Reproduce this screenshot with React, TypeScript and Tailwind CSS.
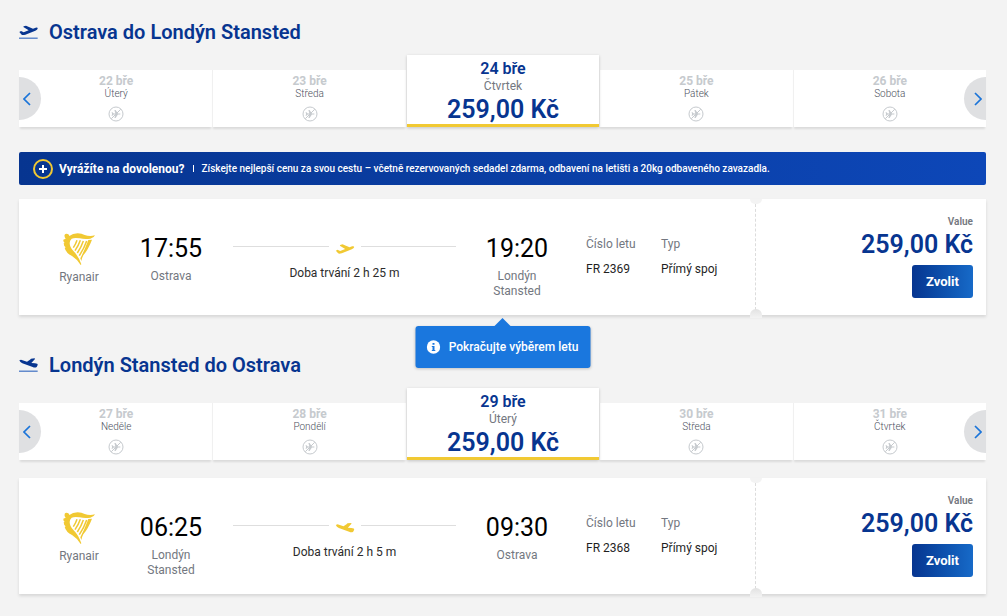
import React from "react";

type Day = { date: string; weekday: string; price?: string };

type Flight = {
  departTime: string;
  departCity: string;
  arriveTime: string;
  arriveCity: string;
  duration: string;
  number: string;
  type: string;
  price: string;
};

type Direction = "takeoff" | "landing";

const TAKEOFF =
  "M1 20 L6 17 L14 21 L29 15 L13 5 L14 3 L21 1 L42 10 L50 7 Q57 6 56 10 Q55 13 49 16 L19 28 Q10 30 8 28 Z";
const LANDING =
  "M1 6 L6 4 L24 10 L33 4 L36 1 L47 0 L48 2 L37 14 L48 15 Q57 15 56 20 L53 26 Q48 29 41 26 L10 15 Q3 12 1 6 Z";

function TitlePlane({ direction }: { direction: Direction }) {
  return (
    <svg viewBox="0 0 57 45" className="h-[15px] w-[19px]" aria-hidden="true">
      <path d={direction === "takeoff" ? TAKEOFF : LANDING} transform="translate(0 4)" fill="#073590" />
      <path d="M0 42.5H56" stroke="#1a56b8" strokeWidth="3" />
    </svg>
  );
}

function RoutePlane({ direction }: { direction: Direction }) {
  return (
    <svg viewBox="0 0 57 30" className="h-[10px] w-5" aria-hidden="true">
      <path d={direction === "takeoff" ? TAKEOFF : LANDING} fill="#f1c933" />
    </svg>
  );
}

function Harp() {
  return (
    <svg viewBox="0 0 96 96" className="size-8" aria-hidden="true">
      <g fill="#f1c933">
        <path d="M5 5 Q8 1 14 3 Q19 4 19 9 Q29 1 44 1 Q56 2 65 6 Q80 11 96 7 Q93 15 82 17 Q66 20 50 16 Q35 13 26 17 Q20 22 20 30 Q20 43 32 55 Q47 70 55 94 L53 96 Q43 79 27 69 Q9 60 5 45 L8 43 Q2 39 2 31 L5 30 Q0 25 1 20 Q4 19 8 17 Q3 11 5 5 Z" />
        <path d="M76 21 L87 20 Q76 49 61 67 Q57 74 55 84 L52 76 Q64 53 76 21 Z" />
      </g>
      <path
        d="M42 22 Q38 34 31 44 M52 22 Q47 37 36 53 M61 24 Q55 42 43 60 M71 24 Q64 45 49 68"
        fill="none"
        stroke="#f1c933"
        strokeWidth="4.5"
      />
    </svg>
  );
}

function NoFlight() {
  return (
    <svg viewBox="0 0 16 16" className="size-4" role="img" aria-label="Bez letu">
      <circle cx="8" cy="8" r="7" fill="none" stroke="#c6cace" strokeWidth="1" />
      <path
        d="M3.5 6.3h1l1.2 1.2h1.700L6.400 4h1.200l2.300 3.500h2.200q1 .5 0 1H9.900L7.600 12H6.400l1-3.500H5.700L4.500 9.700h-1L4.200 8Z"
        fill="#c6cace"
      />
      <path d="M3.3 12.7 12.7 3.3" stroke="#c6cace" strokeWidth="1" />
    </svg>
  );
}

function Chevron({ side }: { side: "left" | "right" }) {
  return (
    <svg viewBox="0 0 8 14" className="h-[14px] w-2" aria-hidden="true">
      <path
        d={side === "left" ? "M7 1 1 7l6 6" : "M1 1l6 6-6 6"}
        fill="none"
        stroke="#1a74d9"
        strokeWidth="1.7"
      />
    </svg>
  );
}

function Title({ direction, children }: { direction: Direction; children: React.ReactNode }) {
  return (
    <div className="flex h-7 items-center gap-[11px] pt-px">
      <TitlePlane direction={direction} />
      <h2 className="text-xl leading-7 font-semibold text-[#073590]">{children}</h2>
    </div>
  );
}

function DayPicker({ days }: { days: Day[] }) {
  return (
    <div className="relative mt-2.5">
      <div className="grid grid-cols-5 items-end">
        {days.map((day) =>
          day.price ? (
            <button
              key={day.date}
              type="button"
              aria-pressed="true"
              className="relative ml-px flex h-[72px] flex-col items-center border-b-3 border-[#f1c933] bg-white pt-1 shadow-[0_1px_3px_rgba(0,0,0,0.2)]"
            >
              <span className="text-base leading-5 font-semibold text-[#073590]">{day.date}</span>
              <span className="text-xs leading-[14px] text-[#737780]">{day.weekday}</span>
              <span className="text-[25px] leading-[34px] font-semibold text-[#073590]">{day.price}</span>
            </button>
          ) : (
            <button
              key={day.date}
              type="button"
              disabled
              className="flex h-[57px] flex-col items-center border-l border-[#f0f0f0] bg-white pt-1 shadow-[0_3px_2px_-1px_rgba(0,0,0,0.1)] first:border-white"
            >
              <span className="text-xs leading-[14px] font-bold text-[#c6cace]">{day.date}</span>
              <span className="text-[10px] leading-3 font-light text-[#4b4f5c]">{day.weekday}</span>
              <span className="mt-1.5">
                <NoFlight />
              </span>
            </button>
          ),
        )}
      </div>
      <button
        type="button"
        aria-label="Předchozí dny"
        className="absolute bottom-[7px] left-0 flex h-[43px] w-[22px] items-center rounded-r-full bg-[#dfe0e2] pl-1"
      >
        <Chevron side="left" />
      </button>
      <button
        type="button"
        aria-label="Další dny"
        className="absolute right-0 bottom-[7px] flex h-[43px] w-[22px] items-center justify-end rounded-l-full bg-[#dfe0e2] pr-1"
      >
        <Chevron side="right" />
      </button>
    </div>
  );
}

function Banner() {
  return (
    <div className="mt-[25px] flex h-[33px] items-center rounded-xs bg-linear-to-r from-[#073590] to-[#0d47b8] pl-3.5 text-white">
      <svg viewBox="0 0 20 20" className="size-5" aria-hidden="true">
        <circle cx="10" cy="10" r="9" fill="none" stroke="#f1c933" strokeWidth="2" />
        <path d="M10 6v8M6 10h8" stroke="#fff" strokeWidth="2" />
      </svg>
      <strong className="ml-1.5 text-xs font-bold">Vyrážíte na dovolenou?</strong>
      <span className="mx-2 h-[7px] w-px bg-white" />
      <span className="text-[10px] font-medium">
        Získejte nejlepší cenu za svou cestu – včetně rezervovaných sedadel zdarma, odbavení na letišti a 20kg
        odbaveného zavazadla.
      </span>
    </div>
  );
}

function Stop({ time, city }: { time: string; city: string }) {
  return (
    <div className="flex flex-col items-center pt-[35px] text-center">
      <time className="text-[25px] leading-[30px] text-black">{time}</time>
      <span className="mt-[5px] w-16 text-xs leading-[15px] text-[#737780]">{city}</span>
    </div>
  );
}

function FlightCard({ flight, direction }: { flight: Flight; direction: Direction }) {
  return (
    <article className="relative flex h-[116px] bg-white shadow-[0_2px_3px_rgba(0,0,0,0.12)]">
      <div className="grid flex-1 grid-cols-[72px_112px_1fr_110px_184px] pl-6">
        <div className="flex flex-col items-center pt-[34px]">
          <Harp />
          <span className="mt-1 text-xs leading-4 text-[#737780]">Ryanair</span>
        </div>
        <Stop time={flight.departTime} city={flight.departCity} />
        <div className="flex flex-col items-center px-1.5 pt-[42px]">
          <div className="flex w-full items-start gap-1.5">
            <span className="mt-[5px] h-px flex-1 bg-[#dedede]" />
            <span className="mt-[3px]">
              <RoutePlane direction={direction} />
            </span>
            <span className="mt-[5px] h-px flex-1 bg-[#dedede]" />
          </div>
          <span className="mt-[11px] text-xs leading-4 text-[#2b2b2b]">Doba trvání {flight.duration}</span>
        </div>
        <Stop time={flight.arriveTime} city={flight.arriveCity} />
        <dl className="grid grid-cols-[75px_1fr] content-start pt-[37px] pl-3.5 text-xs leading-4">
          <div className="flex flex-col gap-[9px]">
            <dt className="text-[#737780]">Číslo letu</dt>
            <dd className="text-[#1f1f1f]">{flight.number}</dd>
          </div>
          <div className="flex flex-col gap-[9px]">
            <dt className="text-[#737780]">Typ</dt>
            <dd className="text-[#1f1f1f]">{flight.type}</dd>
          </div>
        </dl>
      </div>
      <div className="relative flex w-[230px] flex-col items-end pt-4 pr-[13px]">
        <span className="absolute top-[5px] bottom-[5px] -left-px border-l border-dashed border-[#dcdcdc]" />
        <span className="absolute top-0 -left-1.5 h-[5px] w-3 rounded-b-full bg-[#f3f3f3]" />
        <span className="absolute -bottom-[3px] -left-1.5 h-[9px] w-3 rounded-t-full bg-linear-to-b from-[#e2e2e2] to-[#f3f3f3]" />
        <span className="text-[10px] leading-[14px] font-semibold text-[#737780]">Value</span>
        <span className="text-[25px] leading-8 font-semibold text-[#073590]">{flight.price}</span>
        <button
          type="button"
          className="mt-1 h-[33px] w-[61px] rounded-[3px] bg-linear-to-r from-[#073590] to-[#176ac8] text-[13px] font-bold text-white"
        >
          Zvolit
        </button>
      </div>
    </article>
  );
}

function Hint() {
  return (
    <div
      role="tooltip"
      className="absolute top-full left-1/2 mt-[11px] flex h-[42px] w-[175px] -translate-x-1/2 items-center justify-center gap-2 rounded-[3px] bg-[#1a77de] text-xs font-medium whitespace-nowrap text-white shadow-[0_1px_3px_rgba(0,0,0,0.2)]"
    >
      <svg viewBox="0 0 18 9" className="absolute -top-2 left-1/2 h-[9px] w-[18px] -translate-x-1/2" aria-hidden="true">
        <path d="M0 9 9 0l9 9Z" fill="#1a77de" />
      </svg>
      <svg viewBox="0 0 14 14" className="size-3.5" aria-hidden="true">
        <circle cx="7" cy="7" r="6.7" fill="#fff" />
        <path d="M6 3h2v1.8H6zM5.3 6H8v4h.8v1H5.3v-1H6V7h-.7Z" fill="#1a77de" />
      </svg>
      Pokračujte výběrem letu
    </div>
  );
}

const outboundDays: Day[] = [
  { date: "22 bře", weekday: "Úterý" },
  { date: "23 bře", weekday: "Středa" },
  { date: "24 bře", weekday: "Čtvrtek", price: "259,00 Kč" },
  { date: "25 bře", weekday: "Pátek" },
  { date: "26 bře", weekday: "Sobota" },
];

const returnDays: Day[] = [
  { date: "27 bře", weekday: "Neděle" },
  { date: "28 bře", weekday: "Pondělí" },
  { date: "29 bře", weekday: "Úterý", price: "259,00 Kč" },
  { date: "30 bře", weekday: "Středa" },
  { date: "31 bře", weekday: "Čtvrtek" },
];

const outbound: Flight = {
  departTime: "17:55",
  departCity: "Ostrava",
  arriveTime: "19:20",
  arriveCity: "Londýn Stansted",
  duration: "2 h 25 m",
  number: "FR 2369",
  type: "Přímý spoj",
  price: "259,00 Kč",
};

const inbound: Flight = {
  departTime: "06:25",
  departCity: "Londýn Stansted",
  arriveTime: "09:30",
  arriveCity: "Ostrava",
  duration: "2 h 5 m",
  number: "FR 2368",
  type: "Přímý spoj",
  price: "259,00 Kč",
};

export default function App() {
  return (
    <main className="min-h-screen bg-[#f3f3f3] pt-[17px] pr-[21px] pb-[22px] pl-[19px] font-['Roboto',sans-serif]">
      <section>
        <Title direction="takeoff">Ostrava do Londýn Stansted</Title>
        <DayPicker days={outboundDays} />
        <Banner />
        <div className="relative mt-3.5">
          <FlightCard flight={outbound} direction="takeoff" />
          <Hint />
        </div>
      </section>
      <section className="mt-[35px]">
        <Title direction="landing">Londýn Stansted do Ostrava</Title>
        <DayPicker days={returnDays} />
        <div className="mt-[18px]">
          <FlightCard flight={inbound} direction="landing" />
        </div>
      </section>
    </main>
  );
}
